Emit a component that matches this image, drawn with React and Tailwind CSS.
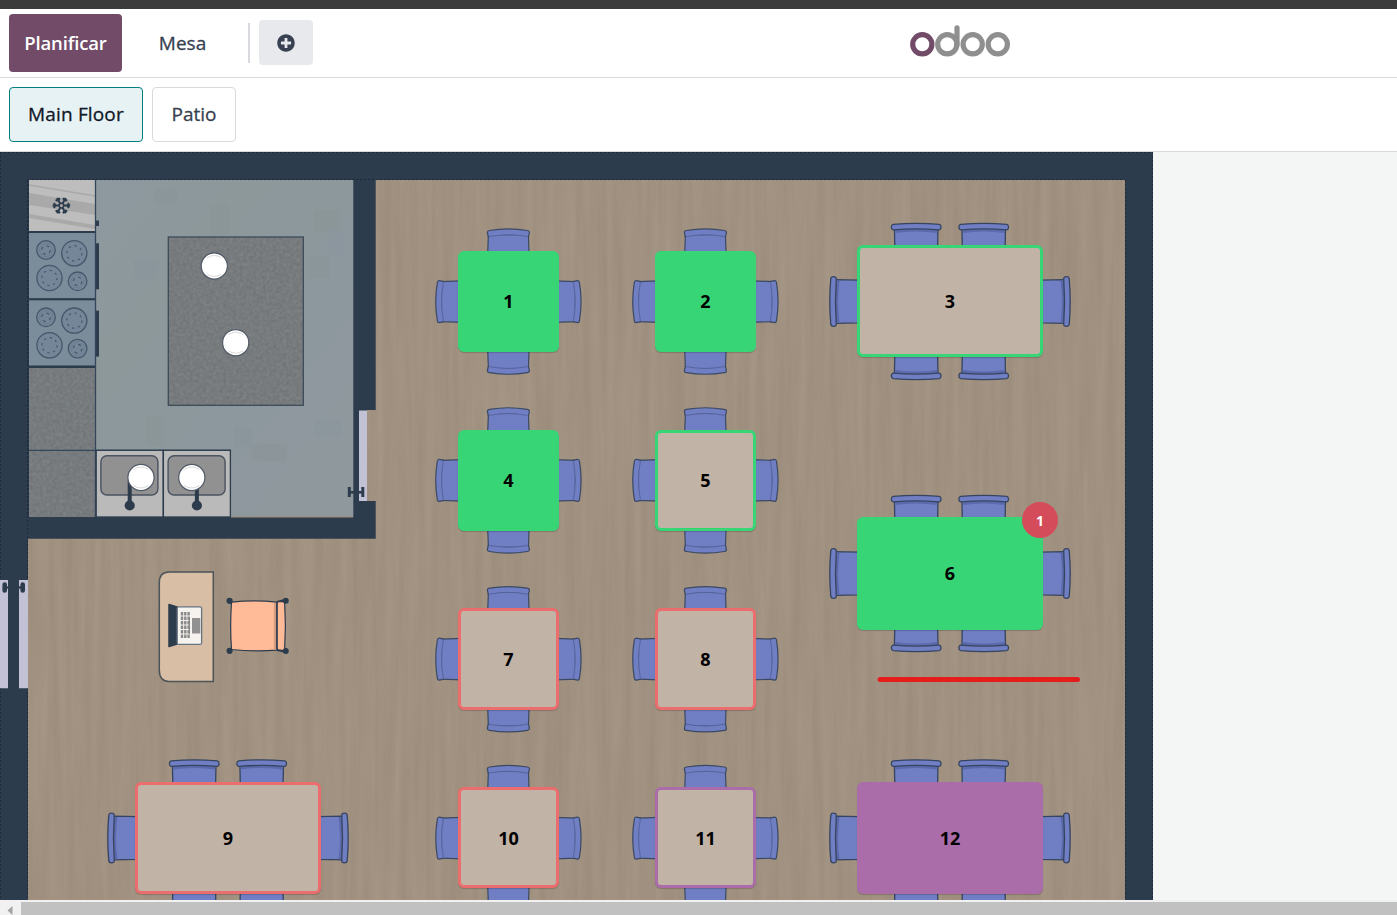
import { FaPlusCircle } from "react-icons/fa";

const INK = "#2d3c4d";

const SQUARE_TABLES = [
  { n: 1, x: 508.4, y: 301.6, left: 458, top: 99 },
  { n: 2, x: 705.4, y: 301.6, left: 655, top: 99 },
  { n: 4, x: 508.4, y: 480.4, left: 458, top: 278 },
  { n: 5, x: 705.4, y: 480.4, left: 655, top: 278 },
  { n: 7, x: 508.4, y: 659.2, left: 458, top: 456 },
  { n: 8, x: 705.4, y: 659.2, left: 655, top: 456 },
  { n: 10, x: 508.4, y: 838.1, left: 458, top: 635 },
  { n: 11, x: 705.4, y: 838.1, left: 655, top: 635 },
];

const LARGE_TABLES = [
  { n: 3, x: 950, y: 301.5, left: 857, top: 93 },
  { n: 6, x: 950, y: 573.5, left: 857, top: 365 },
  { n: 9, x: 228, y: 838, left: 135, top: 630 },
  { n: 12, x: 950, y: 838, left: 857, top: 630 },
];

const LOOK = {
  1: "h-[101px] bg-[#37d576]",
  2: "h-[101px] bg-[#37d576]",
  3: "h-[112px] border-[3px] border-[#37d576] bg-[#c1b3a5]",
  4: "h-[101px] bg-[#37d576]",
  5: "h-[101px] border-[3px] border-[#37d576] bg-[#c1b3a5]",
  6: "h-[113px] bg-[#37d576]",
  7: "h-[102px] border-[3px] border-[#eb6d6d] bg-[#c1b3a5]",
  8: "h-[102px] border-[3px] border-[#eb6d6d] bg-[#c1b3a5]",
  9: "h-[112px] border-[3px] border-[#eb6d6d] bg-[#c1b3a5]",
  10: "h-[101px] border-[3px] border-[#eb6d6d] bg-[#c1b3a5] pt-[2px]",
  11: "h-[101px] border-[3px] border-[#ab6daa] bg-[#c1b3a5] pt-[2px]",
  12: "h-[112px] bg-[#ab6daa]",
};

function OdooLogo() {
  return (
    <svg width="102" height="34" viewBox="909 25 102 34" fill="none" strokeWidth="5.2">
      <circle cx="922.3" cy="44.3" r="9.6" stroke="#714b67" />
      <g stroke="#8f8f8f">
        <circle cx="947.3" cy="44.3" r="9.6" />
        <path d="M957 27.8V44.3" strokeLinecap="round" />
        <circle cx="972.7" cy="44.3" r="9.6" />
        <circle cx="997.8" cy="44.3" r="9.6" />
      </g>
    </svg>
  );
}

/* A small chair, back edge facing up, drawn round the table centre. */
function SmallChair({ turn }) {
  return (
    <g transform={`rotate(${turn})`} fill="#707ec3" stroke="#3b4962" strokeWidth="1.2">
      <path d="M-20-67 L-21-40 H21 L20-67Z" />
      <path
        d="M-20-64.5L-21-69Q-21.2-70.8-19-71.1Q0-74.2 19-71.1Q21.2-70.8 21-69L20-64.5Q19-65.3 17.5-65.5Q0-68.2-17.5-65.5Q-19-65.3-20-64.5Z"
        stroke="none"
      />
      <path d="M-20-64.5L-21-69Q-21.2-70.8-19-71.1Q0-74.2 19-71.1Q21.2-70.8 21-69L20-64.5" fill="none" />
      <path d="M-19.3-65Q0-68.6 19.3-65" stroke="#56659f" strokeWidth="1" fill="none" />
    </g>
  );
}

/* A chair with a rounded back rail, rail at the local origin. */
function RailChair({ x, y, turn }) {
  return (
    <g transform={`translate(${x} ${y}) rotate(${turn})`} fill="#707ec3" stroke="#36445f" strokeWidth="1.3">
      <path d="M-21.8 6L-21.3 30H21.3L21.8 6Z" />
      <path d="M-21 7H21V10.5Q0 7.5-21 10.5Z" fill="#5b6aac" stroke="none" />
      <path d="M-23 1.8Q0-0.2 23 1.8Q24.8 2.2 24.8 4.4Q24.8 7.5 22.5 7.3Q0 5.6-22.5 7.3Q-24.8 7.5-24.8 4.4Q-24.8 2.2-23 1.8Z" />
    </g>
  );
}

function Burner({ x, y, r }) {
  const small = r < 11;
  return (
    <g fill="none" stroke="#45586b">
      <circle cx={x} cy={y} r={r} fill="#748697" strokeWidth="1.3" />
      <circle
        cx={x}
        cy={y}
        r={small ? 4.3 : 7.6}
        strokeWidth="1.2"
        strokeDasharray={small ? "3 3.75" : "2.2 3.77"}
      />
      {small && <circle cx={x} cy={y} r="6.6" stroke="#64788a" strokeWidth="0.6" />}
    </g>
  );
}

function Stove({ y }) {
  return (
    <g>
      <rect x="29" y={y} width="66" height="65.5" fill="#7b8c9b" />
      <Burner x={46} y={y + 17} r={9.3} />
      <Burner x={74.3} y={y + 20.3} r={12.6} />
      <Burner x={49.5} y={y + 45} r={12.6} />
      <Burner x={77.6} y={y + 48.3} r={9.3} />
      <rect x="95" y={y + 10.3} width="4" height="46" fill={INK} />
      <rect x="28.5" y={y + 65.3} width="67" height="2" fill={INK} />
    </g>
  );
}

function Plate({ x, y }) {
  return (
    <g fill="none">
      <circle cx={x} cy={y} r="13.1" fill="#fff" stroke="#525b68" strokeWidth="1.2" />
      <path d={`M${x - 7.5} ${y - 8}Q${x} ${y - 13} ${x + 7.5} ${y - 8}`} stroke="#d9d9d9" />
      <path d={`M${x - 7.5} ${y + 8}Q${x} ${y + 13} ${x + 7.5} ${y + 8}`} stroke="#d9d9d9" />
    </g>
  );
}

function Sink({ x }) {
  return (
    <g>
      <rect x={x} y="450.3" width="67" height="66.7" fill="#bababa" stroke={INK} strokeWidth="1.3" />
      <rect x={x + 4.7} y="455.7" width="57" height="39.3" rx="6" fill="#919191" stroke="#4b5360" strokeWidth="1.4" />
      <path d={`M${x + 33.5} 480V505`} stroke={INK} strokeWidth="4" />
      <circle cx={x + 33.5} cy="505.5" r="5.1" fill={INK} />
    </g>
  );
}

function Grain({ id, x, y, w, h }) {
  return <rect x={x} y={y} width={w} height={h} filter={`url(#${id})`} />;
}

function FloorPlan() {
  return (
    <svg className="block" width="1153" height="748" viewBox="0 152 1153 748">
      <defs>
        <filter id="wood" x="0" y="0" width="1" height="1" colorInterpolationFilters="sRGB">
          <feTurbulence type="fractalNoise" baseFrequency="0.12 0.006" numOctaves="3" seed="5" />
          <feColorMatrix values="0.05 0 0 0 0.604  0.05 0 0 0 0.543  0.05 0 0 0 0.476  0 0 0 0 1" />
        </filter>
        <filter id="stone" x="0" y="0" width="1" height="1" colorInterpolationFilters="sRGB">
          <feTurbulence type="fractalNoise" baseFrequency="0.3" numOctaves="3" seed="8" />
          <feColorMatrix values="0.09 0 0 0 0.42  0.09 0 0 0 0.437  0.09 0 0 0 0.445  0 0 0 0 1" />
        </filter>
        <linearGradient id="tile" x1="0" y1="0" x2="1" y2="1">
          <stop offset="0" stopColor="#8d999f" />
          <stop offset="0.3" stopColor="#8d989b" />
          <stop offset="0.6" stopColor="#8d989e" />
          <stop offset="1" stopColor="#8f989d" />
        </linearGradient>
        <clipPath id="fridge">
          <rect x="29" y="180" width="66" height="51" />
        </clipPath>
      </defs>

      <rect x="0" y="152" width="1153" height="748" fill={INK} />
      <Grain id="wood" x={28} y={180} w={1097} h={720} />
      <g fill="none" stroke="#1d2b3a" strokeDasharray="2 2">
        <path d="M0 152.5H1153M0.5 152V900M28 179.5H1125M27.5 180V900M1125.5 180V900M1152.5 152V900" />
      </g>

      <path d="M28 180H375.7V538.7H28Z" fill={INK} />
      <rect x="95" y="180" width="258.3" height="337" fill="url(#tile)" />
      <g opacity="0.06">
        <rect x="155" y="188" width="22" height="17" fill="#75847e" />
        <rect x="210" y="205" width="19" height="30" fill="#75847e" />
        <rect x="314" y="210" width="26" height="22" fill="#72836c" />
        <rect x="308" y="256" width="22" height="22" fill="#72837c" />
        <rect x="327" y="230" width="18" height="24" fill="#7683a4" />
        <rect x="133" y="260" width="26" height="19" fill="#7683a4" />
        <rect x="147" y="416" width="17" height="30" fill="#728069" />
        <rect x="234" y="427" width="18" height="20" fill="#697a83" />
        <rect x="252" y="444" width="35" height="17" fill="#728069" />
        <rect x="315" y="420" width="26" height="17" fill="#7683a4" />
      </g>
      <path d="M231 517H353.3" stroke="#9d8d78" />

      <g clipPath="url(#fridge)">
        <rect x="29" y="180" width="66" height="51" fill="#bdbdbd" />
        <path d="M29 193L95 204V215L29 205Z" fill="#a9a9a9" />
        <path d="M29 214L95 225V229L29 218Z" fill="#a9a9a9" />
        <path d="M29 185L95 196" stroke="#a9a9a9" strokeWidth="1.5" />
      </g>
      <g transform="translate(61.4 205.6)" stroke={INK} fill="none">
        {[0, 60, 120, 180, 240, 300].map((a) => (
          <path key={a} transform={`rotate(${a})`} d="M2.4 0H8.8M7.6-2.4L5.8 0L7.6 2.4" strokeWidth="2" />
        ))}
        <circle r="2.3" strokeWidth="1.5" />
      </g>
      <rect x="28.5" y="231" width="67" height="2" fill={INK} />
      <rect x="95" y="220.5" width="4" height="5.5" fill={INK} />
      <Stove y={233} />
      <Stove y={300.3} />
      <Grain id="stone" x={29} y={368} w={66} h={149} />
      <path d="M29 450.3H231M95.5 180V517" stroke="#34465a" strokeWidth="1.3" />
      <path d="M28 180.5V517" stroke="#1d2b3a" strokeDasharray="2 2" />
      <Sink x={96.2} />
      <Sink x={163.4} />
      <Grain id="stone" x={168} y={237} w={135} h={168} />
      <rect x="168.3" y="237" width="135" height="168.3" fill="none" stroke="#3c4a5a" strokeWidth="1.3" />
      <Plate x={214.3} y={266} />
      <Plate x={235.7} y={342.7} />
      <Plate x={141} y={477.5} />
      <Plate x={191.8} y={477.5} />

      <rect x="359" y="410.5" width="8" height="90.5" fill="#c2c1d5" />
      <Grain id="wood" x={367} y={410.5} w={9} h={90.5} />
      <path d="M349.3 487V497M362.8 487V497" stroke={INK} strokeWidth="3" />
      <path d="M349 492.3H363" stroke={INK} strokeWidth="2.6" />

      <path d="M0 580H8V688.3H0ZM19 580H28V688.3H19Z" fill="#c2c1d5" />
      <g stroke={INK} strokeLinecap="round">
        <path d="M4.7 584.5V590.5M22.7 584.5V590.5" strokeWidth="4.6" />
        <path d="M5 587.5H22" strokeWidth="2.2" strokeLinecap="butt" />
      </g>

      <path
        d="M213.3 572H169Q159.3 572 159.3 583V670Q159.3 681.4 169 681.4H213.3Z"
        fill="#d8bea4"
        stroke="#4c5359"
        strokeWidth="1.5"
      />
      <path d="M169 604.5L177 607V644L169 646.5Z" fill={INK} stroke={INK} strokeLinejoin="round" strokeWidth="1.5" />
      <rect x="177.2" y="606.8" width="24.4" height="37.6" rx="1.5" fill="#f6f3ee" stroke="#667382" strokeWidth="1.3" />
      <path
        d="M182 612V639M185.3 612V639M188.6 612V639"
        stroke="#898989"
        strokeWidth="2.4"
        strokeDasharray="3.6 0.9"
      />
      <path d="M189.4 617V634" stroke="#898989" strokeWidth="1.2" />
      <rect x="192" y="618" width="8.3" height="15.5" fill="#919191" />

      <g stroke={INK} strokeWidth="1.2">
        <path d="M277 602L285.5 599.8M277 650L285.5 651.8" strokeWidth="2" />
        <path d="M231.5 602.2Q254 599.5 277 602.2V650.2Q254 651.8 231.5 649.5Q229.8 626 231.5 602.2Z" fill="#ffba97" />
        <path d="M276.5 603Q278 601.5 280 601.7L284.6 601.5Q286.2 626 284.6 650.5L280 650Q278 650 276.5 649Z" fill="#ffba97" />
        <path d="M275 603V649.5" stroke="#d39c83" strokeWidth="2.2" />
        <path d="M277.3 603V650" strokeWidth="1" />
        <g fill={INK} stroke="none">
          <circle cx="229.6" cy="600.8" r="3.1" />
          <circle cx="229.6" cy="650.8" r="3.1" />
          <circle cx="285.8" cy="600.8" r="3" />
          <circle cx="285.8" cy="651" r="3" />
        </g>
      </g>

      {SQUARE_TABLES.map((t) => (
        <g key={t.n} transform={`translate(${t.x} ${t.y})`}>
          <SmallChair turn={0} />
          <SmallChair turn={90} />
          <SmallChair turn={180} />
          <SmallChair turn={270} />
        </g>
      ))}
      {LARGE_TABLES.map((t) => (
        <g key={t.n} transform={`translate(${t.x} ${t.y})`}>
          <RailChair x={-33.8} y={-79} turn={0} />
          <RailChair x={33.7} y={-79} turn={0} />
          <RailChair x={-33.8} y={79} turn={180} />
          <RailChair x={33.7} y={79} turn={180} />
          <RailChair x={-121} y={0} turn={270} />
          <RailChair x={121} y={0} turn={90} />
        </g>
      ))}
      <path d="M880 679.4H1077.5" stroke="#e51d1d" strokeWidth="5" strokeLinecap="round" />
    </svg>
  );
}

function Table({ t, size }) {
  return (
    <div
      className={`absolute flex items-center justify-center rounded-[6px] text-[18px] font-bold text-black shadow-[0_1px_1px_rgba(0,0,0,0.18)] ${size} ${LOOK[t.n]}`}
      style={{ left: t.left, top: t.top }}
    >
      {t.n}
    </div>
  );
}

export default function App() {
  return (
    <div className="flex h-[915px] w-[1397px] flex-col overflow-hidden bg-white font-['Open_Sans','Noto_Sans',sans-serif] text-[19px] text-[#374151]">
      <div className="h-[9px] shrink-0 bg-[#3b3b3b]" />
      <header className="flex h-[69px] shrink-0 items-center border-b border-[#d8dadd] pl-[9px]">
        <button className="h-[58px] w-[113px] rounded-[4px] bg-[#714b67] text-[18.5px] font-semibold tracking-[-0.15px] text-white">
          Planificar
        </button>
        <button className="ml-[9px] h-[58px] w-[103px] [-webkit-text-stroke:0.3px]">Mesa</button>
        <div className="ml-[14px] h-10 w-[2px] bg-[#d8dadd]" />
        <button className="mb-[2px] ml-[9px] flex h-[45px] w-[54px] items-center justify-center rounded-[4px] bg-[#e7e9ed] pt-px">
          <FaPlusCircle size={18} />
        </button>
        <div className="ml-[596px] -mt-[3px]">
          <OdooLogo />
        </div>
      </header>
      <nav className="flex h-[74px] shrink-0 items-center gap-[9px] border-b border-[#d8dadd] pl-[9px] [-webkit-text-stroke:0.3px]">
        <button className="h-[55px] w-[134px] rounded-[4px] border border-[#017e84] bg-[#e6f2f3] pb-px tracking-[0.15px] text-[#111827]">
          Main Floor
        </button>
        <button className="h-[55px] w-[84px] rounded-[4px] border border-[#d8dadd] pb-px">Patio</button>
      </nav>
      <main className="h-[748px] shrink-0 overflow-hidden bg-[#f4f6f6]">
        <div className="relative h-[748px] w-[1153px] overflow-hidden">
          <FloorPlan />
          {SQUARE_TABLES.map((t) => (
            <Table key={t.n} t={t} size="w-[101px]" />
          ))}
          {LARGE_TABLES.map((t) => (
            <Table key={t.n} t={t} size="w-[186px]" />
          ))}
          <div className="absolute left-[1022px] top-[350px] flex size-9 items-center justify-center rounded-full bg-[#d44c59] text-[14px] font-bold text-white">
            1
          </div>
        </div>
      </main>
      <div className="flex h-[15px] shrink-0 bg-[#f1f1f1] pt-[2px]">
        <div className="flex w-[21px] justify-end pr-2 pt-1">
          <svg width="6" height="9" viewBox="0 0 6 9">
            <path d="M5.5 0V9L0.5 4.5Z" fill="#a3a3a3" />
          </svg>
        </div>
        <div className="grow bg-[#c1c1c1]" />
      </div>
    </div>
  );
}
